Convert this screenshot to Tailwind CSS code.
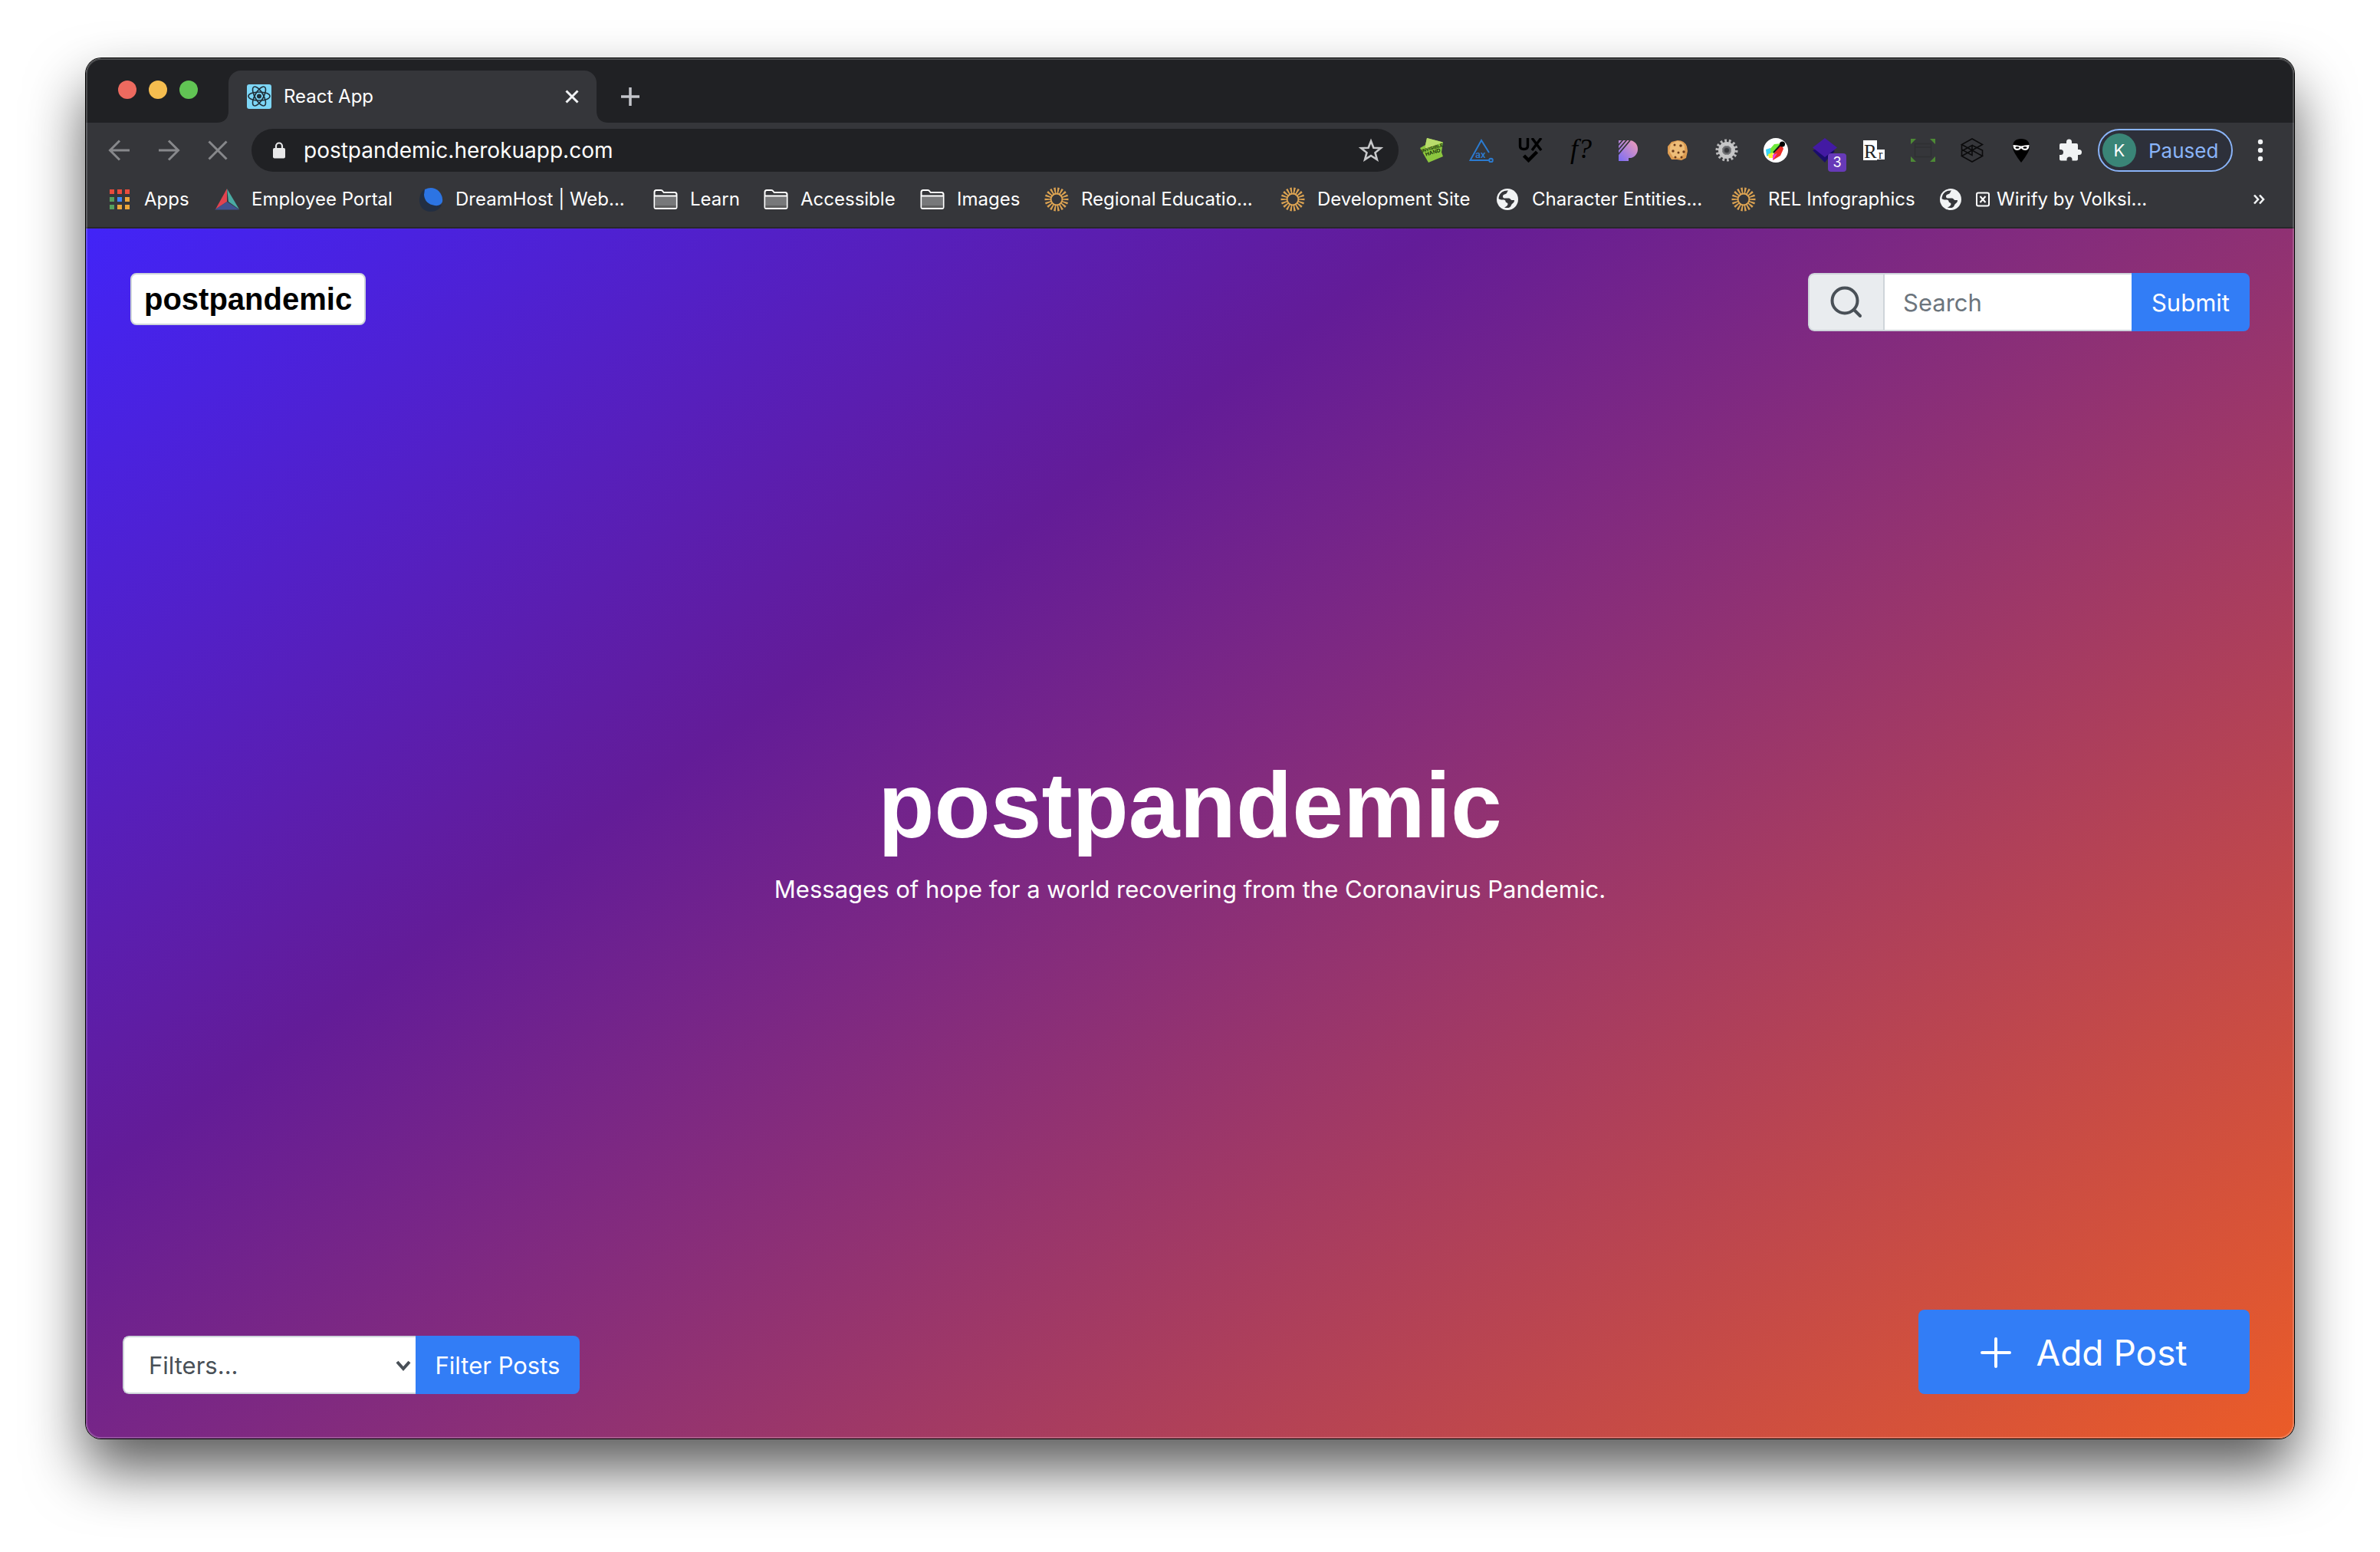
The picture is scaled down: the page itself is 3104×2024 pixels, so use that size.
<!DOCTYPE html>
<html lang="en">
<head>
<meta charset="utf-8">
<title>React App</title>
<script src="https://cdn.jsdelivr.net/npm/@tailwindcss/browser@4"></script>
</head>
<body class="min-h-screen bg-white flex flex-col px-28 pt-[76px] pb-[148px] font-['Inter',sans-serif] text-white">

<svg class="hidden" aria-hidden="true">
  <symbol id="folder" viewBox="0 0 32 32">
    <path d="M1.5 6.500q0-2.500 2.500-2.500h6q1.500 0 2.500 1.500l1.200 1.500H28q2.500 0 2.500 2.500V26q0 2-2 2H3.500q-2 0-2-2z" fill="#35363a" stroke="#fff" stroke-width="2"/>
    <path d="M2.500 12h27v15h-27z" fill="#77787a"/><path d="M2.500 24h27v3h-27z" fill="#5f5f60"/><path d="M1.500 11.500h29" stroke="#fff" stroke-width="2"/>
  </symbol>
  <symbol id="sun" viewBox="0 0 32 32">
    <circle cx="16" cy="16" r="11" fill="none" stroke="#dca352" stroke-width="9" pathLength="36" stroke-dasharray="1 1" stroke-dashoffset=".5"/>
    <circle cx="16" cy="16" r="7.500" fill="none" stroke="#dca352" stroke-width="2"/>
  </symbol>
  <symbol id="globe" viewBox="0 0 32 32">
    <circle cx="16" cy="16" r="14" fill="#f1f3f4"/>
    <path d="M17 4.500c-2 2-1 3.500-3.500 4.500-2 1-3.500 1-3.500 3.200 0 1.500 1 2.300 3 2.300h5c2 0 2 2.500 3.500 2.500h3c.8 0 .5 1 .2 2-1 2-2.200 2.200-3.200 3.500-.8 1.500-1.500 4-4 4.500-1.500.2-4 .2-5.500-.5 2-1 4.500-2.500 4.500-4.500 0-2-3-1.500-3-3.500 0-1.500-1.500-2-3.500-2-3 0-5.500-.5-5.500-2C5 8.500 10 4 17 4.500z" fill="#35363a"/>
  </symbol>
</svg>

<div class="relative flex-1 flex flex-col rounded-[20px] overflow-clip shadow-[0_0_0_1px_#000,0_40px_76px_rgba(0,0,0,0.65)]">

  <!-- Tab strip -->
  <header class="h-[84px] bg-[#202124] flex items-end">
    <div class="w-[170px] h-full pl-[42px] pb-0.5 flex items-center gap-4">
      <button aria-label="Close window" class="size-6 rounded-full bg-[#ed6a5f]"></button>
      <button aria-label="Minimize window" class="size-6 rounded-full bg-[#f5bd4f]"></button>
      <button aria-label="Zoom window" class="size-6 rounded-full bg-[#61c454]"></button>
    </div>
    <svg class="size-4" viewBox="0 0 16 16"><path d="M16 0v16H0Q16 16 16 0" fill="#35363a"/></svg>
    <div class="w-[480px] h-[68px] rounded-t-2xl bg-[#35363a] flex items-center pl-6 pr-5">
      <svg class="size-8" viewBox="0 0 32 32"><rect width="32" height="32" rx="3" fill="#7dd6f6"/><g fill="none" stroke="#20303a" stroke-width="1.600"><ellipse cx="16" cy="15.500" rx="14" ry="5.500"/><ellipse cx="16" cy="15.500" rx="14" ry="5.500" transform="rotate(60 16 15.500)"/><ellipse cx="16" cy="15.500" rx="14" ry="5.500" transform="rotate(120 16 15.500)"/></g><circle cx="16" cy="15.500" r="3" fill="#20303a"/></svg>
      <span class="ml-4 text-[24px] leading-8">React App</span>
      <button aria-label="Close tab" class="ml-auto size-6"><svg viewBox="0 0 24 24"><path d="M4.500 4.500l15 15m0-15l-15 15" stroke="#f1f3f4" stroke-width="3"/></svg></button>
    </div>
    <svg class="size-4" viewBox="0 0 16 16"><path d="M0 0v16h16Q0 16 0 0" fill="#35363a"/></svg>
    <button aria-label="New tab" class="h-[68px] w-6 ml-4 flex items-center"><svg class="size-6" viewBox="0 0 24 24"><path d="M12 0v24M0 12h24" stroke="#c3c5ca" stroke-width="3.500"/></svg></button>
  </header>

  <!-- Toolbar -->
  <div class="h-[72px] bg-[#35363a] flex items-center">
    <div class="w-[216px] pl-7 flex gap-8">
      <button aria-label="Back" class="size-8"><svg viewBox="0 0 32 32" fill="none" stroke="#87888b" stroke-width="3"><path d="M29 16H4.500M16 3.500L3.500 16 16 28.500"/></svg></button>
      <button aria-label="Forward" class="size-8"><svg viewBox="0 0 32 32" fill="none" stroke="#87888b" stroke-width="3"><path d="M3 16h24.500M16 3.500L28.500 16 16 28.500"/></svg></button>
      <button aria-label="Stop" class="size-8"><svg viewBox="0 0 32 32" fill="none" stroke="#87888b" stroke-width="3"><path d="M4.500 4.500l23 23M27.500 4.500l-23 23"/></svg></button>
    </div>
    <div class="flex-1 h-14 rounded-full bg-[#202124] flex items-center pl-7 pr-5">
      <svg class="w-4 h-6" viewBox="0 0 16 24"><rect y="9" width="16" height="13.500" rx="2" fill="#e8e8e9"/><path d="M4 10V6.500a4 4 0 018 0V10" fill="none" stroke="#e8e8e9" stroke-width="2.200"/></svg>
      <input aria-label="Address" value="postpandemic.herokuapp.com" class="ml-6 flex-1 min-w-0 bg-transparent text-[28px] leading-9 outline-none">
      <button aria-label="Bookmark this page" class="size-8"><svg viewBox="0 0 32 32"><path d="M16 4l3.400 8.700 9.300.5-7.200 5.900 2.400 9L16 23l-7.900 5.100 2.400-9-7.200-5.900 9.300-.5z" fill="none" stroke="#c7c8ca" stroke-width="2.600"/></svg></button>
    </div>
    <!-- Extensions -->
    <div class="pl-7 pr-5 flex gap-8">
      <svg class="size-8" viewBox="0 0 32 32"><path d="M9 0l21 5.500-2 13 2 5.500-19 8L0 13l7-4z" fill="#8cc63f"/><path d="M9 0l21 5.500-23 9L7 9z" fill="#b9dc6c"/><g transform="rotate(-17 16 16)" font-family="Liberation Sans" font-weight="700" font-size="7" fill="#17300a" text-anchor="middle"><text x="17" y="15" font-size="6">INVISIBLE</text><text x="16" y="21">HAND</text></g></svg>
      <svg class="size-8" viewBox="0 0 32 32" fill="none" stroke="#2b7bd0" stroke-width="2"><path d="M26 19L16 3 1.500 29H26"/><circle cx="28.500" cy="29" r="2.300"/><text x="8" y="26" font-family="Roboto" font-size="13" font-weight="500" fill="#2b7bd0" stroke="none">ax</text></svg>
      <svg class="size-8" viewBox="0 0 32 32" fill="none" stroke="#000" stroke-width="3.400"><path d="M2.500 0v10.500q0 4 5 4t5-4V0M18 0l12 16M30 0L18 16"/><path d="M7.500 23l6 6L24.500 18" stroke-width="4.500"/></svg>
      <svg class="size-8 overflow-visible" viewBox="0 0 32 32"><text x="4" y="26" font-family="Liberation Serif" font-style="italic" font-size="36">f?</text></svg>
      <svg class="size-8" viewBox="0 0 32 32"><defs><linearGradient id="pg" x1="0" y1="1" x2="1" y2="0"><stop stop-color="#7a6cf5"/><stop offset="1" stop-color="#f49fb6"/></linearGradient></defs><path d="M3 3h14a11 11.500 0 010 23h-1v4H3z" fill="url(#pg)"/><path d="M2 10L9 2M2 16L14 2M2 22L18 3" stroke="#35363a" stroke-width="1.800"/></svg>
      <svg class="size-8" viewBox="0 0 32 32"><path d="M16 3q9 0 12 8l1 6-2 9-6 3-6-1-7 0-5-8 0-9 5-6z" fill="#dd9c52"/><path d="M15 4q8 0 10 7v9l-6 6-9-1-5-8 2-9z" fill="#eebd78"/><g fill="#6a3a1a"><circle cx="12" cy="9" r="1.500"/><circle cx="20" cy="10" r="1.800"/><circle cx="10" cy="17" r="1.700"/><circle cx="17" cy="19" r="1.500"/><circle cx="24" cy="18" r="1.700"/><circle cx="13" cy="25" r="1.500"/><circle cx="21" cy="25" r="1.500"/></g></svg>
      <svg class="size-8" viewBox="0 0 32 32"><circle cx="16" cy="16" r="12.500" fill="none" stroke="#b9b9ba" stroke-width="4" pathLength="28" stroke-dasharray="1 1"/><circle cx="16" cy="16" r="8.500" fill="none" stroke="#c6c6c7" stroke-width="5"/><circle cx="16" cy="16" r="5.500" fill="#606165" stroke="#8f9092"/><circle cx="16" cy="16" r="3" fill="#35363a"/></svg>
      <svg class="size-8" viewBox="0 0 32 32"><circle cx="16" cy="16" r="16" fill="#fff"/><path d="M24 7L14 8 7 16l-3 8 9-4z" fill="#6ee83a"/><path d="M3 15l6-2 0 8-5 2z" fill="#35d4f4"/><path d="M6 21l6-2v7H7z" fill="#fbee2f"/><path d="M23 8l3 6-4 9-10 6 1-8z" fill="#ee2d24"/><path d="M12 22l6-2-6 9z" fill="#ee3bd8"/><path d="M13 19L24 7" stroke="#111" stroke-width="2"/><circle cx="24.500" cy="8" r="3.500" fill="#000"/></svg>
      <div class="relative size-8"><svg viewBox="0 0 32 32"><path d="M4 14l12 17 13-14-6-3z" fill="#150a63"/><path d="M0 16l16 16 4-6L6 14z" fill="#1a0d6b"/><path d="M16 0l16 12.500L16 25 0 12.500z" fill="#431aa3"/></svg><span class="absolute left-5 top-5 w-6 h-6 rounded bg-[#673ab7] text-[18px] leading-6 text-center">3</span></div>
      <svg class="size-8" viewBox="0 0 32 32"><path d="M2 3h18v26H2zM20 15h10v13H20z" fill="#fff"/><g font-family="Liberation Serif" fill="#222"><text x="3" y="26" font-size="25">R</text><text x="22" y="27" font-size="16">r</text></g></svg>
      <svg class="size-8" viewBox="0 0 32 32" fill="#4d8a35"><path d="M0 1h7L0 8zM32 1v7l-7-7zM0 31v-7l7 7zM32 31h-7l7-7z"/><path d="M5.500 7.500h21v17h-21zM5.500 12h21" fill="none" stroke="#2f3033" stroke-width="1.500"/></svg>
      <svg class="size-8" viewBox="0 0 32 32" fill="none" stroke="#0b0b0c" stroke-width="1.600"><path d="M16 1L2.500 8.500 29.500 23.500 16 31 2.500 23.500 29.500 8.500zM2.500 8.500v6.500L16 22.500V9.500L2.500 17v6.500M29.500 23.500V16L16 9.500"/></svg>
      <svg class="size-8" viewBox="0 0 32 32"><path d="M16 1q11 0 11 11 0 6-11 20Q5 18 5 12 5 1 16 1z"/><path d="M5.500 9q5 0 10.500 1.500Q21 9 26.500 9q0 7-5 7-3 0-5.500-2.500Q13.500 16 10.500 16q-5 0-5-7z" fill="#fff"/><ellipse cx="11" cy="12.500" rx="2.600" ry="1.300"/><ellipse cx="21" cy="12.500" rx="2.600" ry="1.300"/></svg>
      <svg class="size-8" viewBox="0 0 32 32"><path d="M4 7h7V5a3.500 3.500 0 017 0v2h6q2 0 2 2v6h1.500a3.500 3.500 0 010 7H26v5.500q0 2-2 2h-5.500V28a3.500 3.500 0 00-7 0v1.500H4q-2 0-2-2V22h1.500a3.500 3.500 0 000-7H2V9q0-2 2-2z" fill="#f1f3f4"/></svg>
    </div>
    <button class="w-44 h-14 rounded-full border-2 border-[#8ab4f8] bg-[#2d303a] flex items-center pl-1 text-[26px] text-[#8ab4f8]"><span class="size-11 rounded-full bg-[#3a8577] text-white text-[22px] flex items-center justify-center">K</span><span class="ml-4">Paused</span></button>
    <button aria-label="Menu" class="ml-5 mr-7 size-8"><svg viewBox="0 0 32 32" fill="#f1f3f4"><circle cx="16" cy="5" r="3.200"/><circle cx="16" cy="16" r="3.200"/><circle cx="16" cy="27" r="3.200"/></svg></button>
  </div>

  <!-- Bookmarks -->
  <nav aria-label="Bookmarks" class="h-[66px] pb-2 pl-7 bg-[#35363a] border-b-2 border-[#27282a] flex items-center text-[24px] leading-8 whitespace-nowrap">
    <a href="#" class="w-[140px] flex items-center gap-4"><svg class="size-8" viewBox="0 0 32 32"><path d="M3 3h6v6H3zM13 3h6v6h-6zM23 3h6v6h-6z" fill="#e94b3c"/><path d="M3 13h6v6H3zM3 23h6v6H3z" fill="#55a05d"/><path d="M13 13h6v6h-6z" fill="#3f87f5"/><path d="M23 13h6v6h-6zM13 23h6v6h-6zM23 23h6v6h-6z" fill="#eba63a"/></svg>Apps</a>
    <a href="#" class="w-[266px] flex items-center gap-4"><svg class="size-8" viewBox="0 0 32 32"><path d="M16 2v17L1 29z" fill="#e0434f"/><path d="M16 2l16 27-14-10z" fill="#4aaba3"/><path d="M0 29.500L16 19l16 10.500z" fill="#41528f"/></svg>Employee Portal</a>
    <a href="#" class="w-[306px] flex items-center gap-4"><svg class="size-8" viewBox="0 0 32 32"><path d="M7 3C-3 12-1 32 16 32q9 0 14-8z" fill="#222e42"/><path d="M8 3q10-5 18 2 6 6 5 14-2 6-10 5Q8 22 7 10z" fill="#2c74e3"/></svg>DreamHost | Web...</a>
    <a href="#" class="w-36 flex items-center gap-4"><svg class="size-8"><use href="#folder"/></svg>Learn</a>
    <a href="#" class="w-[204px] flex items-center gap-4"><svg class="size-8"><use href="#folder"/></svg>Accessible</a>
    <a href="#" class="w-[162px] flex items-center gap-4"><svg class="size-8"><use href="#folder"/></svg>Images</a>
    <a href="#" class="w-[308px] flex items-center gap-4"><svg class="size-8"><use href="#sun"/></svg>Regional Educatio...</a>
    <a href="#" class="w-[280px] flex items-center gap-4"><svg class="size-8"><use href="#sun"/></svg>Development Site</a>
    <a href="#" class="w-[308px] flex items-center gap-4"><svg class="size-8"><use href="#globe"/></svg>Character Entities...</a>
    <a href="#" class="w-[270px] flex items-center gap-4"><svg class="size-8"><use href="#sun"/></svg>REL Infographics</a>
    <a href="#" class="flex items-center gap-4"><svg class="size-8"><use href="#globe"/></svg><span class="flex items-center gap-2"><svg class="size-5" viewBox="0 0 20 20" fill="none" stroke="#fff" stroke-width="2"><rect x="2" y="1.500" width="16" height="17" rx="2"/><path d="M6.500 6l7 8m0-8l-7 8"/></svg>Wirify by Volksi...</span></a>
    <button aria-label="More bookmarks" class="ml-auto mr-9 size-5"><svg viewBox="0 0 20 20" fill="none" stroke="#f1f3f4" stroke-width="2.600"><path d="M4 4.500l5 5.500-5 5.500M11 4.500l5 5.500-5 5.500"/></svg></button>
  </nav>

  <!-- Page -->
  <main class="flex-1 flex flex-col justify-between bg-[linear-gradient(145deg,#4224f7_0%,#631c98_34.5%,#eb5c28_100%)] text-[31px] leading-12">
    <div class="flex justify-between items-start px-[58px] pt-[58px]">
      <a href="#" class="h-[68px] px-4 rounded-lg border-2 border-[#ced4da] bg-white text-black font-['Liberation_Sans',sans-serif] font-bold text-[40px] leading-16">postpandemic</a>
      <form class="flex h-[76px] w-[576px] rounded-lg overflow-hidden">
        <label for="search" class="w-[100px] rounded-l-lg border-2 border-[#ced4da] bg-[#e9ecef] flex items-center justify-center"><svg class="size-11" viewBox="0 0 44 44" fill="none" stroke="#495057" stroke-width="4" stroke-linecap="round"><circle cx="20" cy="20" r="16.500"/><path d="M32 32l8 8"/></svg></label>
        <input id="search" type="search" placeholder="Search" class="flex-1 min-w-0 px-6 pt-0.5 bg-white border-y-2 border-[#ced4da] text-[#495057] placeholder:text-[#6c757d] outline-none">
        <button type="button" class="w-[154px] pt-0.5 bg-[#327df6]">Submit</button>
      </form>
    </div>
    <section class="text-center pt-[22px]">
      <h1 class="font-['Liberation_Sans',sans-serif] font-bold text-[120px] leading-36">postpandemic</h1>
      <p class="mt-3.5">Messages of hope for a world recovering from the Coronavirus Pandemic.</p>
    </section>
    <div class="flex justify-between items-end pl-12 pr-[58px] pb-[58px]">
      <form class="flex h-[76px] rounded-lg overflow-hidden">
        <div class="relative w-[382px]">
          <select aria-label="Filters" class="appearance-none w-full h-full pl-8 pt-0.5 rounded-l-lg bg-white border-2 border-r-0 border-[#ced4da] text-[#495057]"><option>Filters...</option></select>
          <svg class="absolute right-1.5 top-7 size-5" viewBox="0 0 20 20"><path d="M2 6l8 9 8-9" fill="none" stroke="#495057" stroke-width="4"/></svg>
        </div>
        <button type="button" class="w-[214px] pt-0.5 bg-[#327df6]">Filter Posts</button>
      </form>
      <button type="button" class="w-[432px] h-[110px] pt-0.5 rounded-lg bg-[#327df6] flex items-center justify-center gap-8 text-[46px]"><svg class="size-10" viewBox="0 0 40 40"><path d="M20 2v36M2 20h36" stroke="#fff" stroke-width="4" stroke-linecap="round"/></svg>Add Post</button>
    </div>
  </main>

  <!-- Light inner edge of the window -->
  <div class="absolute inset-0 rounded-[20px] border-2 border-white/20 pointer-events-none"></div>
</div>
</body>
</html>
